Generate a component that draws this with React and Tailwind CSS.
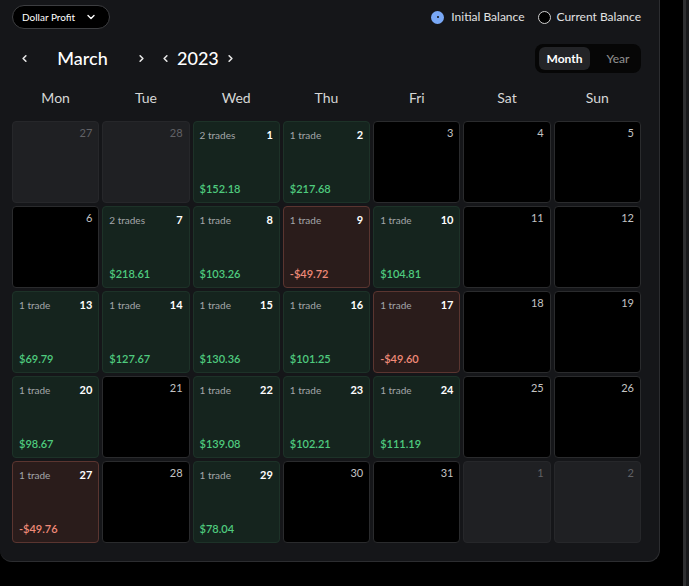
import React, { useState } from "react";
import { ChevronDown, ChevronLeft, ChevronRight } from "lucide-react";

const trades = {
  1: { count: 2, pnl: 152.18 },
  2: { count: 1, pnl: 217.68 },
  7: { count: 2, pnl: 218.61 },
  8: { count: 1, pnl: 103.26 },
  9: { count: 1, pnl: -49.72 },
  10: { count: 1, pnl: 104.81 },
  13: { count: 1, pnl: 69.79 },
  14: { count: 1, pnl: 127.67 },
  15: { count: 1, pnl: 130.36 },
  16: { count: 1, pnl: 101.25 },
  17: { count: 1, pnl: -49.6 },
  20: { count: 1, pnl: 98.67 },
  22: { count: 1, pnl: 139.08 },
  23: { count: 1, pnl: 102.21 },
  24: { count: 1, pnl: 111.19 },
  27: { count: 1, pnl: -49.76 },
  29: { count: 1, pnl: 78.04 },
};

const weekdays = ["Mon", "Tue", "Wed", "Thu", "Fri", "Sat", "Sun"];

const buildDays = () => {
  const days = [
    { day: 27, outside: true },
    { day: 28, outside: true },
  ];
  for (let d = 1; d <= 31; d++) days.push({ day: d, outside: false });
  days.push({ day: 1, outside: true }, { day: 2, outside: true });
  return days;
};

const formatPnl = (v) =>
  (v < 0 ? "-$" : "$") + Math.abs(v).toFixed(2);

const DayCell = ({ day, outside }) => {
  if (outside) {
    return (
      <div className="h-[82px] rounded-[4px] border border-[#26272a] bg-[#1f2023] flex justify-end pt-[4px] pr-[6px]">
        <span className="text-[11px] leading-[14px] text-[#616266]">{day}</span>
      </div>
    );
  }

  const t = trades[day];
  if (!t) {
    return (
      <div className="h-[82px] rounded-[4px] border border-[#2a2b2d] bg-black flex justify-end pt-[4px] pr-[6px]">
        <span className="text-[11px] leading-[14px] text-[#c4c4c4]">{day}</span>
      </div>
    );
  }

  const loss = t.pnl < 0;
  return (
    <div
      className={`h-[82px] rounded-[4px] border flex flex-col justify-between px-[6px] pt-[6px] pb-[6px] ${
        loss ? "bg-[#2a1c1b] border-[#5a3530]" : "bg-[#15241e] border-[#1d3228]"
      }`}
    >
      <div className="flex items-center justify-between">
        <span className="text-[10px] leading-[14px] text-[#a3a6a9]">
          {t.count} {t.count > 1 ? "trades" : "trade"}
        </span>
        <span className="text-[11px] leading-[14px] font-bold text-white">{day}</span>
      </div>
      <span
        className={`text-[11px] leading-[14px] font-semibold ${
          loss ? "text-[#f08a78]" : "text-[#4fcb7e]"
        }`}
      >
        {formatPnl(t.pnl)}
      </span>
    </div>
  );
};

const App = () => {
  const [balance, setBalance] = useState("initial");
  const [view, setView] = useState("month");
  const days = buildDays();

  return (
    <div className="min-h-screen bg-black flex font-['Lato','Noto_Sans',sans-serif]">
      <div className="w-[660px] h-[562px] shrink-0 bg-[#151619] border-r border-b border-[#2c2d30] rounded-b-xl pl-3 pr-[18px] pt-[5px]">
        {/* top bar */}
        <div className="flex items-center justify-between h-6">
          <button className="h-6 w-[98px] rounded-full border border-[#3d3e41] bg-black flex items-center pl-[9px] gap-[10px] text-[10px] text-white">
            Dollar Profit
            <ChevronDown size={12} strokeWidth={2.75} />
          </button>
          <div className="flex items-center gap-[13px] text-[12px] text-[#e2e2e2]">
            <label className="flex items-center gap-[7px]" onClick={() => setBalance("initial")}>
              <span
                className={`w-[13px] h-[13px] rounded-full flex items-center justify-center ${
                  balance === "initial" ? "bg-[#79a8f6]" : "border-[1.5px] border-[#d0d0d0] bg-black"
                }`}
              >
                {balance === "initial" && <span className="w-[2px] h-[2px] rounded-full bg-[#111]" />}
              </span>
              Initial Balance
            </label>
            <label className="flex items-center gap-[6px]" onClick={() => setBalance("current")}>
              <span
                className={`w-[13px] h-[13px] rounded-full flex items-center justify-center ${
                  balance === "current" ? "bg-[#79a8f6]" : "border-[1.5px] border-[#d0d0d0] bg-black"
                }`}
              >
                {balance === "current" && <span className="w-[2px] h-[2px] rounded-full bg-[#111]" />}
              </span>
              Current Balance
            </label>
          </div>
        </div>

        {/* month nav */}
        <div className="mt-[15px] h-[29px] flex items-center justify-between">
          <div className="flex items-center text-[18px] font-medium text-white">
            <button className="w-6 flex justify-center text-[#e6e6e6]">
              <ChevronLeft size={11} strokeWidth={3.5} />
            </button>
            <span className="w-[93px] text-center">March</span>
            <button className="w-6 flex justify-center text-[#e6e6e6]">
              <ChevronRight size={11} strokeWidth={3.5} />
            </button>
            <button className="w-6 flex justify-center text-[#e6e6e6]">
              <ChevronLeft size={11} strokeWidth={3.5} />
            </button>
            <span>2023</span>
            <button className="w-6 flex justify-center text-[#e6e6e6]">
              <ChevronRight size={11} strokeWidth={3.5} />
            </button>
          </div>
          <div className="h-[29px] w-[106px] rounded-lg bg-[#060606] p-[3px] pl-1 flex items-center text-[12px]">
            <button
              onClick={() => setView("month")}
              className={`h-[23px] w-[51px] rounded-md ${
                view === "month" ? "bg-[#232427] text-white font-bold" : "text-[#8c8c8c] font-medium"
              }`}
            >
              Month
            </button>
            <button
              onClick={() => setView("year")}
              className={`h-[23px] flex-1 rounded-md pl-2 ${
                view === "year" ? "bg-[#232427] text-white font-bold" : "text-[#8c8c8c] font-medium"
              }`}
            >
              Year
            </button>
          </div>
        </div>

        {/* weekdays */}
        <div className="mt-[10px] h-7 grid grid-cols-7 gap-[3px] items-center">
          {weekdays.map((w) => (
            <div key={w} className="text-center text-[14px] text-[#d6d6d6]">
              {w}
            </div>
          ))}
        </div>

        {/* days */}
        <div className="mt-[10px] grid grid-cols-7 gap-[3px]">
          {days.map((d, i) => (
            <DayCell key={i} {...d} />
          ))}
        </div>
      </div>
      <div className="w-[23px] shrink-0" />
      <div className="w-[3px] shrink-0 bg-[#2e2f31]" />
      <div className="flex-1 bg-[#18191b]" />
    </div>
  );
};

export default App;
